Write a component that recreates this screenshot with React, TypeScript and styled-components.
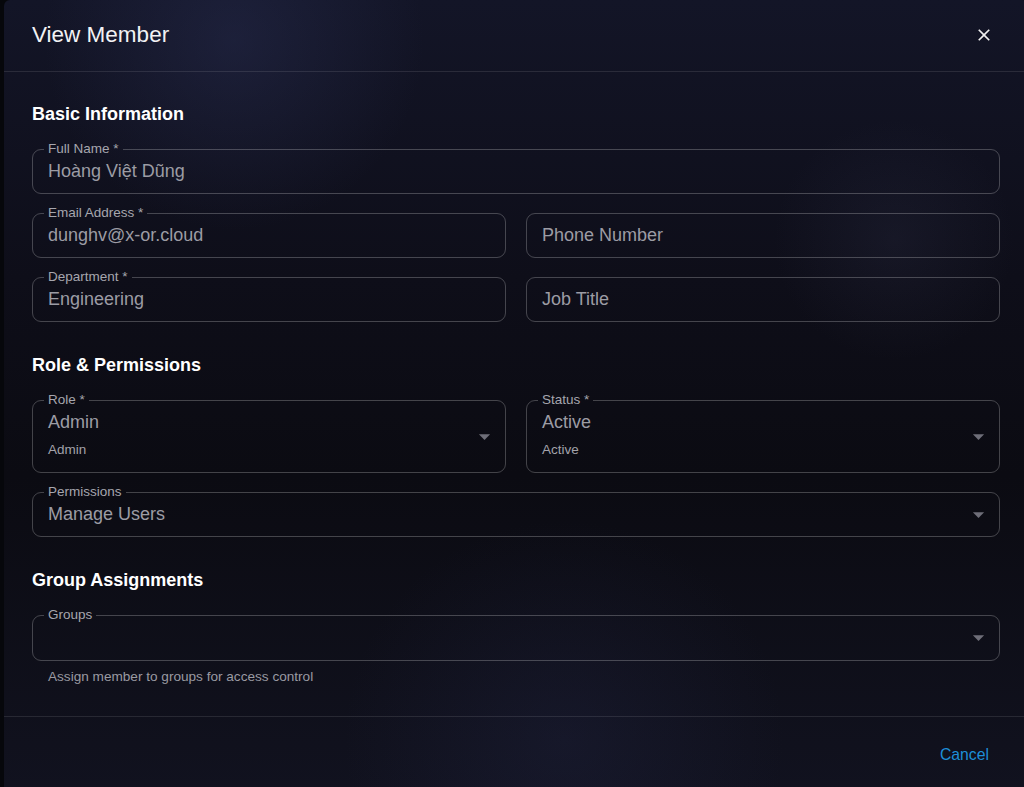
import React from "react";
import styled, { createGlobalStyle } from "styled-components";

const Global = createGlobalStyle`
  html, body { margin: 0; padding: 0; background: #06070b; overflow: hidden; }
  * { box-sizing: border-box; }
  body { font-family: "Liberation Sans", Arial, sans-serif; }
`;

const Page = styled.div`
  width: 1024px;
  height: 787px;
  overflow: hidden;
  background: #06070b;
  padding-left: 4px;
`;

const Dialog = styled.div`
  width: 1024px;
  min-height: 787px;
  border-radius: 6px;
  background:
    radial-gradient(circle at 230px 40px, rgba(48, 54, 96, 0.35), transparent 190px),
    radial-gradient(circle at 890px 240px, rgba(60, 62, 90, 0.18), transparent 120px),
    radial-gradient(circle at 560px 740px, rgba(40, 44, 80, 0.25), transparent 220px),
    linear-gradient(180deg, #131527 0%, #0e0e19 35%, #0b0b12 60%, #11121f 100%);
  display: flex;
  flex-direction: column;
`;

const Header = styled.header`
  height: 72px;
  border-bottom: 1px solid rgba(255, 255, 255, 0.1);
  display: flex;
  align-items: center;
  justify-content: space-between;
  padding: 0 34px 2px 28px;
`;

const Title = styled.h2`
  margin: 0;
  font-size: 22.5px;
  font-weight: 400;
  color: #f2f2f4;
  line-height: 36px;
`;

const CloseButton = styled.button`
  background: none;
  border: 0;
  padding: 0;
  width: 20px;
  height: 20px;
  display: flex;
  color: #f0f0f0;
  cursor: pointer;
`;

const Body = styled.div`
  padding: 30px 28px 31px;
  display: flex;
  flex-direction: column;
  gap: 31px;
`;

const Section = styled.section`
  display: flex;
  flex-direction: column;
`;

const SectionTitle = styled.h3`
  margin: 0 0 16px;
  font-size: 18px;
  font-weight: 700;
  line-height: 24px;
  color: #ffffff;
`;

const Fields = styled.div`
  display: flex;
  flex-direction: column;
  gap: 12px;
`;

const Row = styled.div`
  display: grid;
  grid-template-columns: 1fr 1fr;
  gap: 20px;
`;

const FieldBox = styled.fieldset<{ $select?: boolean; $empty?: boolean }>`
  margin: 0;
  min-width: 0;
  padding: 5px ${(p) => (p.$select ? "7px" : "16px")} ${(p) => (p.$empty ? "13px" : "12px")} 15px;
  border: 1px solid rgba(255, 255, 255, 0.23);
  border-radius: 9px;
  display: flex;
  align-items: center;
`;

const Legend = styled.legend<{ $empty?: boolean }>`
  float: none;
  height: 14px;
  margin-left: -4px;
  padding: ${(p) => (p.$empty ? "0" : "0 4px")};
  width: ${(p) => (p.$empty ? "0" : "auto")};
  font-size: 13.5px;
  line-height: 14px;
  color: #a6a6ae;
  white-space: nowrap;
`;

const Values = styled.div`
  display: flex;
  flex-direction: column;
  flex: 1;
  min-width: 0;
`;

const Value = styled.div`
  font-size: 18px;
  line-height: 20px;
  height: 20px;
  color: #9c9ca4;
  white-space: nowrap;
`;

const SubValue = styled.div`
  margin-top: 8px;
  font-size: 13.5px;
  line-height: 20px;
  color: #a2a2aa;
`;

const Arrow = styled.svg`
  width: 27px;
  height: 27px;
  margin: -4px 0;
  flex: none;
  fill: #6e6e78;
`;

const Helper = styled.p`
  margin: 7px 16px 0;
  font-size: 13.6px;
  line-height: 17px;
  color: #9a9aa2;
`;

const Footer = styled.footer`
  border-top: 1px solid rgba(255, 255, 255, 0.1);
  display: flex;
  justify-content: flex-end;
  padding: 18px 31px 18px;
`;

const TextButton = styled.button`
  background: none;
  border: 0;
  padding: 10px 8px;
  font-family: inherit;
  font-size: 15.75px;
  line-height: 20px;
  color: #1d8fd8;
  cursor: pointer;
`;

type FieldProps = {
  label?: string;
  value?: string;
  sub?: string;
  select?: boolean;
};

const Field = ({ label, value, sub, select }: FieldProps) => (
  <FieldBox $select={select} $empty={!value}>
    <Legend $empty={!label}>{label}</Legend>
    <Values>
      <Value>{value}</Value>
      {sub && <SubValue>{sub}</SubValue>}
    </Values>
    {select && (
      <Arrow viewBox="0 0 24 24">
        <path d="M7 10l5 5 5-5z" />
      </Arrow>
    )}
  </FieldBox>
);

export default function App() {
  return (
    <>
      <Global />
      <Page>
        <Dialog>
          <Header>
            <Title>View Member</Title>
            <CloseButton aria-label="close">
              <svg viewBox="0 0 24 24" width="20" height="20" fill="currentColor">
                <path d="M19 6.41 17.59 5 12 10.59 6.41 5 5 6.41 10.59 12 5 17.59 6.41 19 12 13.41 17.59 19 19 17.59 13.41 12z" />
              </svg>
            </CloseButton>
          </Header>
          <Body>
            <Section>
              <SectionTitle>Basic Information</SectionTitle>
              <Fields>
                <Field label="Full Name *" value="Hoàng Việt Dũng" />
                <Row>
                  <Field label="Email Address *" value="dunghv@x-or.cloud" />
                  <Field value="Phone Number" />
                </Row>
                <Row>
                  <Field label="Department *" value="Engineering" />
                  <Field value="Job Title" />
                </Row>
              </Fields>
            </Section>
            <Section>
              <SectionTitle>Role &amp; Permissions</SectionTitle>
              <Fields>
                <Row>
                  <Field label="Role *" value="Admin" sub="Admin" select />
                  <Field label="Status *" value="Active" sub="Active" select />
                </Row>
                <Field label="Permissions" value="Manage Users" select />
              </Fields>
            </Section>
            <Section>
              <SectionTitle>Group Assignments</SectionTitle>
              <Field label="Groups" value="" select />
              <Helper>Assign member to groups for access control</Helper>
            </Section>
          </Body>
          <Footer>
            <TextButton>Cancel</TextButton>
          </Footer>
        </Dialog>
      </Page>
    </>
  );
}
